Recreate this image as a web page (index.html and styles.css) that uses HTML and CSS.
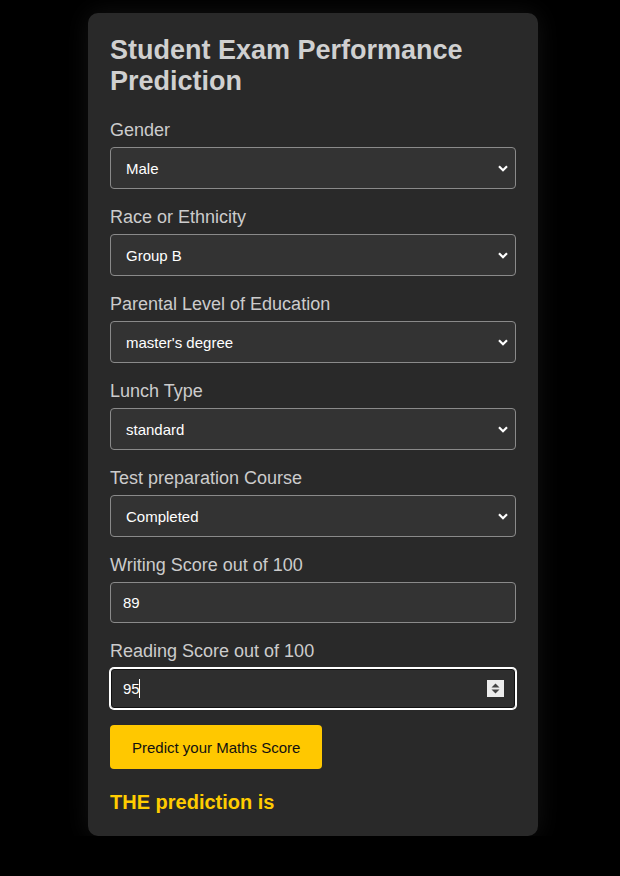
FILE: index.html
```html
<!DOCTYPE html>
<html lang="en">
<head>
<meta charset="utf-8">
<title>Student Exam Performance Prediction</title>
<link rel="stylesheet" href="styles.css">
</head>
<body>
<div class="card">
  <h1 class="title">Student Exam Performance Prediction</h1>
  <form class="form">
    <div class="group">
      <label class="label">Gender</label>
      <div class="select-wrap">
        <select class="field select"><option>Male</option></select>
        <svg class="chev" width="10" height="7" viewBox="0 0 10 7"><path d="M1 1.2 L5 5.2 L9 1.2" fill="none" stroke="#fff" stroke-width="2.2"/></svg>
      </div>
    </div>
    <div class="group">
      <label class="label">Race or Ethnicity</label>
      <div class="select-wrap">
        <select class="field select"><option>Group B</option></select>
        <svg class="chev" width="10" height="7" viewBox="0 0 10 7"><path d="M1 1.2 L5 5.2 L9 1.2" fill="none" stroke="#fff" stroke-width="2.2"/></svg>
      </div>
    </div>
    <div class="group">
      <label class="label">Parental Level of Education</label>
      <div class="select-wrap">
        <select class="field select"><option>master's degree</option></select>
        <svg class="chev" width="10" height="7" viewBox="0 0 10 7"><path d="M1 1.2 L5 5.2 L9 1.2" fill="none" stroke="#fff" stroke-width="2.2"/></svg>
      </div>
    </div>
    <div class="group">
      <label class="label">Lunch Type</label>
      <div class="select-wrap">
        <select class="field select"><option>standard</option></select>
        <svg class="chev" width="10" height="7" viewBox="0 0 10 7"><path d="M1 1.2 L5 5.2 L9 1.2" fill="none" stroke="#fff" stroke-width="2.2"/></svg>
      </div>
    </div>
    <div class="group">
      <label class="label">Test preparation Course</label>
      <div class="select-wrap">
        <select class="field select"><option>Completed</option></select>
        <svg class="chev" width="10" height="7" viewBox="0 0 10 7"><path d="M1 1.2 L5 5.2 L9 1.2" fill="none" stroke="#fff" stroke-width="2.2"/></svg>
      </div>
    </div>
    <div class="group">
      <label class="label">Writing Score out of 100</label>
      <input class="field input" type="text" value="89">
    </div>
    <div class="group">
      <label class="label">Reading Score out of 100</label>
      <div class="input-wrap">
        <input class="field input focused" type="text" value="95">
        <span class="caret"></span>
        <span class="spinner">
          <svg width="17" height="17" viewBox="0 0 17 17"><rect width="17" height="17" fill="#ececec"/><path d="M4.5 7.5 L8.5 3.5 L12.5 7.5 Z" fill="#444"/><path d="M4.5 9.5 L8.5 13.5 L12.5 9.5 Z" fill="#444"/></svg>
        </span>
      </div>
    </div>
    <button class="btn" type="button">Predict your Maths Score</button>
  </form>
  <h3 class="result">THE prediction is</h3>
</div>
</body>
</html>
```
FILE: styles.css
```css
html, body {
  background: #000;
}
body {
  margin: 0;
  padding: 13px 0 0 6px;
  font-family: "Liberation Sans", Arial, sans-serif;
}
.card {
  width: 450px;
  box-sizing: border-box;
  margin: 0 auto;
  padding: 22px;
  background: #292929;
  border-radius: 10px;
  box-shadow: 0 0 24px rgba(255, 255, 255, 0.07);
}
.title {
  margin: 0 0 23px;
  font-size: 27px;
  line-height: 31px;
  font-weight: bold;
  color: #d0d0d0;
}
.form {
  display: flex;
  flex-direction: column;
}
.group {
  display: flex;
  flex-direction: column;
  margin-bottom: 18px;
}
.label {
  font-size: 18px;
  line-height: 21px;
  color: #cccccc;
  margin-bottom: 6px;
}
.field {
  box-sizing: border-box;
  width: 100%;
  background: #333333;
  color: #ffffff;
  border: 1px solid #8a8a8a;
  border-radius: 4px;
  font-family: "Liberation Sans", Arial, sans-serif;
  font-size: 15px;
  margin: 0;
}
.select-wrap {
  position: relative;
}
.select {
  display: block;
  height: 42px;
  padding: 0 30px 0 15px;
  appearance: none;
  -webkit-appearance: none;
  outline: none;
}
.chev {
  position: absolute;
  right: 8px;
  top: 18px;
}
.input {
  display: block;
  height: 41px;
  padding: 0 12px;
  outline: none;
}
.input-wrap {
  position: relative;
}
.focused {
  background: #2e2e2e;
  border-color: #ffffff;
  box-shadow: 0 0 0 1px #ffffff, inset 0 0 0 1px #111;
}
.caret {
  position: absolute;
  left: 29px;
  top: 11px;
  width: 1px;
  height: 19px;
  background: #ffffff;
}
.spinner {
  position: absolute;
  right: 12px;
  top: 12px;
  width: 17px;
  height: 17px;
  display: flex;
}
.btn {
  align-self: flex-start;
  height: 44px;
  padding: 0 22px;
  background: #ffc800;
  color: #111;
  border: none;
  border-radius: 4px;
  font-family: "Liberation Sans", Arial, sans-serif;
  font-size: 15px;
  margin-top: -2px;
}
.result {
  margin: 22px 0 0;
  font-size: 20px;
  line-height: 23px;
  font-weight: bold;
  color: #ffcc00;
}
```
